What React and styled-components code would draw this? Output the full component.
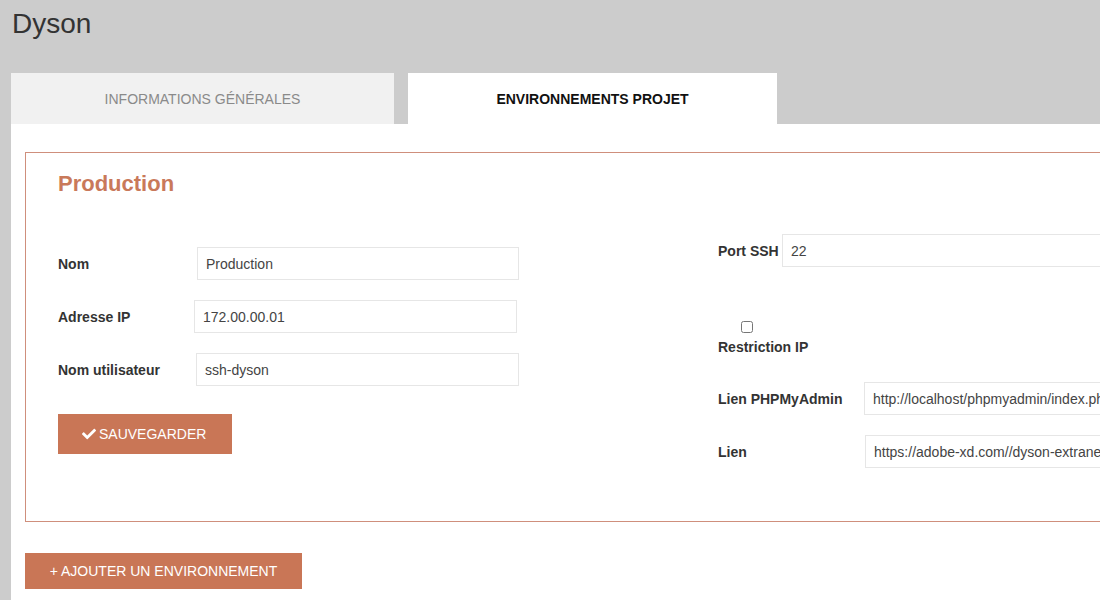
import React from 'react'
import styled, { createGlobalStyle } from 'styled-components'
import { FaCheck } from 'react-icons/fa'

const GlobalStyle = createGlobalStyle`
    html, body {
        margin: 0;
        padding: 0;
        overflow: hidden;
        background: #cccccc;
        font-family: "Liberation Sans", Arial, sans-serif;
    }
`

const App = () => {
    return (
        <Page>
            <GlobalStyle />
            <Title>Dyson</Title>
            <Tabs>
                <Tab $width={383}>Informations générales</Tab>
                <Tab $width={369} $active>Environnements projet</Tab>
            </Tabs>
            <Panel>
                <Fieldset>
                    <Heading>Production</Heading>
                    <Columns>
                        <LeftColumn>
                            <Row>
                                <Label $width={139}>Nom</Label>
                                <Input $width={322} defaultValue="Production" />
                            </Row>
                            <Row>
                                <Label $width={136}>Adresse IP</Label>
                                <Input $width={323} defaultValue="172.00.00.01" />
                            </Row>
                            <Row>
                                <Label $width={138}>Nom utilisateur</Label>
                                <Input $width={323} defaultValue="ssh-dyson" />
                            </Row>
                            <SaveButton>
                                <FaCheck size={14} />
                                Sauvegarder
                            </SaveButton>
                        </LeftColumn>
                        <RightColumn>
                            <Row>
                                <Label $width={64}>Port SSH</Label>
                                <Input defaultValue="22" />
                            </Row>
                            <CheckBlock>
                                <Checkbox type="checkbox" />
                                <CheckLabel>Restriction IP</CheckLabel>
                            </CheckBlock>
                            <Row>
                                <Label $width={146}>Lien PHPMyAdmin</Label>
                                <Input defaultValue="http://localhost/phpmyadmin/index.php" />
                            </Row>
                            <Row>
                                <Label $width={147}>Lien</Label>
                                <Input defaultValue="https://adobe-xd.com//dyson-extranet" />
                            </Row>
                        </RightColumn>
                    </Columns>
                </Fieldset>
                <AddButton>+ Ajouter un environnement</AddButton>
            </Panel>
        </Page>
    )
}

export default App

const Page = styled.div`
    padding-left: 11px;
    width: 1200px;
`

const Title = styled.h1`
    margin: 8px 0 33px 1px;
    font-size: 28px;
    line-height: 32px;
    font-weight: normal;
    color: #333;
`

const Tabs = styled.div`
    display: flex;
    gap: 14px;
`

const Tab = styled.div`
    width: ${p => p.$width}px;
    height: 51px;
    display: flex;
    align-items: center;
    justify-content: center;
    text-transform: uppercase;
    font-size: 14px;
    background: ${p => p.$active ? '#ffffff' : '#f1f1f1'};
    color: ${p => p.$active ? '#111' : '#8a8a8a'};
    font-weight: ${p => p.$active ? 'bold' : 'normal'};
`

const Panel = styled.div`
    background: #ffffff;
    padding: 28px 14px 40px;
    min-height: 420px;
`

const Fieldset = styled.div`
    box-sizing: border-box;
    height: 370px;
    border: 1px solid #cf8f7c;
    padding: 18px 32px 0;
`

const Heading = styled.h2`
    margin: 0;
    font-size: 22px;
    line-height: 26px;
    font-weight: bold;
    color: #c9795a;
`

const Columns = styled.div`
    display: flex;
    align-items: flex-start;
`

const LeftColumn = styled.div`
    width: 461px;
    padding-top: 50px;
`

const RightColumn = styled.div`
    flex: 1;
    margin-left: 199px;
    padding-top: 37px;
`

const Row = styled.div`
    display: flex;
    align-items: center;
    height: 33px;
    margin-bottom: 20px;
`

const Label = styled.label`
    width: ${p => p.$width}px;
    flex-shrink: 0;
    font-size: 14px;
    font-weight: bold;
    color: #333;
`

const Input = styled.input`
    box-sizing: border-box;
    height: 33px;
    ${p => p.$width ? `width: ${p.$width}px;` : 'flex: 1; min-width: 0;'}
    border: 1px solid #e6e6e6;
    padding: 0 8px;
    font-family: "Liberation Sans", Arial, sans-serif;
    font-size: 14px;
    color: #444;
    outline: none;
`

const SaveButton = styled.button`
    display: flex;
    align-items: center;
    gap: 3px;
    height: 40px;
    width: 174px;
    margin-top: 28px;
    padding: 0 24px;
    border: none;
    background: #c97656;
    color: #ffffff;
    font-family: "Liberation Sans", Arial, sans-serif;
    font-size: 14px;
    text-transform: uppercase;
`

const CheckBlock = styled.div`
    margin-top: 54px;
    margin-bottom: 27px;
`

const Checkbox = styled.input`
    display: block;
    width: 12px;
    height: 12px;
    margin: 0 0 6px 23px;
`

const CheckLabel = styled.div`
    font-size: 14px;
    line-height: 16px;
    font-weight: bold;
    color: #333;
`

const AddButton = styled.button`
    display: block;
    margin-top: 31px;
    height: 36px;
    width: 277px;
    border: none;
    background: #c97656;
    color: #ffffff;
    font-family: "Liberation Sans", Arial, sans-serif;
    font-size: 14px;
    text-transform: uppercase;
`
